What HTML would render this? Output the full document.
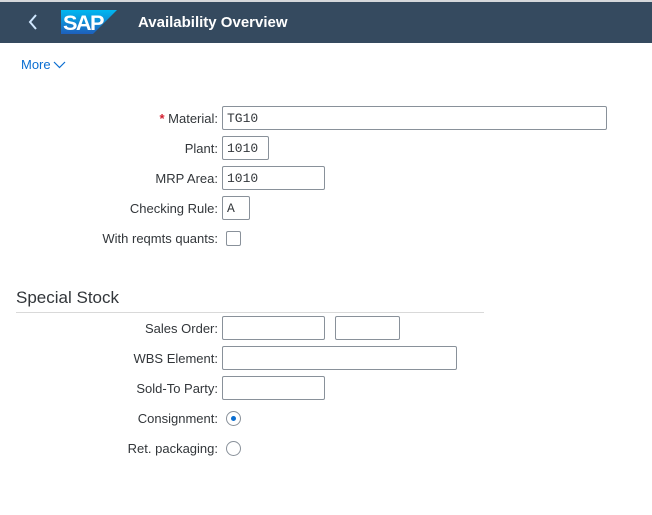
<!DOCTYPE html>
<html><head><meta charset="utf-8"><style>
body{margin:0;width:652px;height:515px;background:#fff;position:relative;font-family:"Liberation Sans",sans-serif;overflow:hidden}
.a{position:absolute}
.lab{position:absolute;right:434px;font-size:13px;color:#32363a;white-space:nowrap;line-height:15px}
.in{position:absolute;box-sizing:border-box;border:1px solid #89919a;border-radius:2px;height:24px;background:#fff;font-family:"Liberation Mono",monospace;font-size:13px;color:#32363a;padding:4px 0 0 4px}
.rad{position:absolute;box-sizing:border-box;width:15px;height:15px;border:1px solid #89919a;border-radius:50%;background:#fff}
</style></head><body>
<div class="a" style="left:0;top:0;width:652px;height:2px;background:#d5d8db"></div>
<div class="a" style="left:0;top:2px;width:652px;height:41px;background:#354a5f"></div>
<svg class="a" style="left:27px;top:14px" width="12" height="16"><path d="M9 1 L3 8 L9 15" stroke="#d1e8ff" stroke-width="2" fill="none"/></svg>
<svg class="a" style="left:61px;top:10px" width="56" height="24"><defs><linearGradient id="g" x1="0" y1="0" x2="0" y2="1"><stop offset="0" stop-color="#00b8f1"/><stop offset="1" stop-color="#1e5fbb"/></linearGradient></defs><polygon points="0,0 56,0 32,24 0,24" fill="url(#g)"/><text x="2" y="20" font-family="Liberation Sans" font-weight="bold" font-size="21" fill="#fff" letter-spacing="-1.5" textLength="40" lengthAdjust="spacingAndGlyphs">SAP</text></svg>
<div class="a" style="left:138px;top:14px;font-size:15px;font-weight:bold;color:#fff">Availability Overview</div>
<div class="a" style="left:21px;top:57px;font-size:13px;color:#0a6ed1">More</div>
<svg class="a" style="left:53px;top:61px" width="13" height="8"><path d="M1 1 L6.5 6.5 L12 1" stroke="#0a6ed1" stroke-width="1.2" fill="none"/></svg>

<div class="lab" style="top:111px"><span style="color:#d32030;font-weight:bold">*</span> Material:</div>
<div class="in" style="left:222px;top:106px;width:385px">TG10</div>
<div class="lab" style="top:141px">Plant:</div>
<div class="in" style="left:222px;top:136px;width:47px">1010</div>
<div class="lab" style="top:171px">MRP Area:</div>
<div class="in" style="left:222px;top:166px;width:103px">1010</div>
<div class="lab" style="top:201px">Checking Rule:</div>
<div class="in" style="left:222px;top:196px;width:28px">A</div>
<div class="lab" style="top:231px">With reqmts quants:</div>
<div class="a" style="left:226px;top:231px;width:15px;height:15px;box-sizing:border-box;border:1px solid #89919a;border-radius:2px"></div>

<div class="a" style="left:16px;top:288px;font-size:17px;color:#32363a">Special Stock</div>
<div class="a" style="left:16px;top:312px;width:468px;height:1px;background:#d9d9d9"></div>
<div class="lab" style="top:321px">Sales Order:</div>
<div class="in" style="left:222px;top:316px;width:103px"></div>
<div class="in" style="left:335px;top:316px;width:65px"></div>
<div class="lab" style="top:351px">WBS Element:</div>
<div class="in" style="left:222px;top:346px;width:235px"></div>
<div class="lab" style="top:381px">Sold-To Party:</div>
<div class="in" style="left:222px;top:376px;width:103px"></div>
<div class="lab" style="top:411px">Consignment:</div>
<div class="rad" style="left:226px;top:411px"><div class="a" style="left:4px;top:4px;width:5px;height:5px;border-radius:50%;background:#0a6ed1"></div></div>
<div class="lab" style="top:441px">Ret. packaging:</div>
<div class="rad" style="left:226px;top:441px"></div>
</body></html>
